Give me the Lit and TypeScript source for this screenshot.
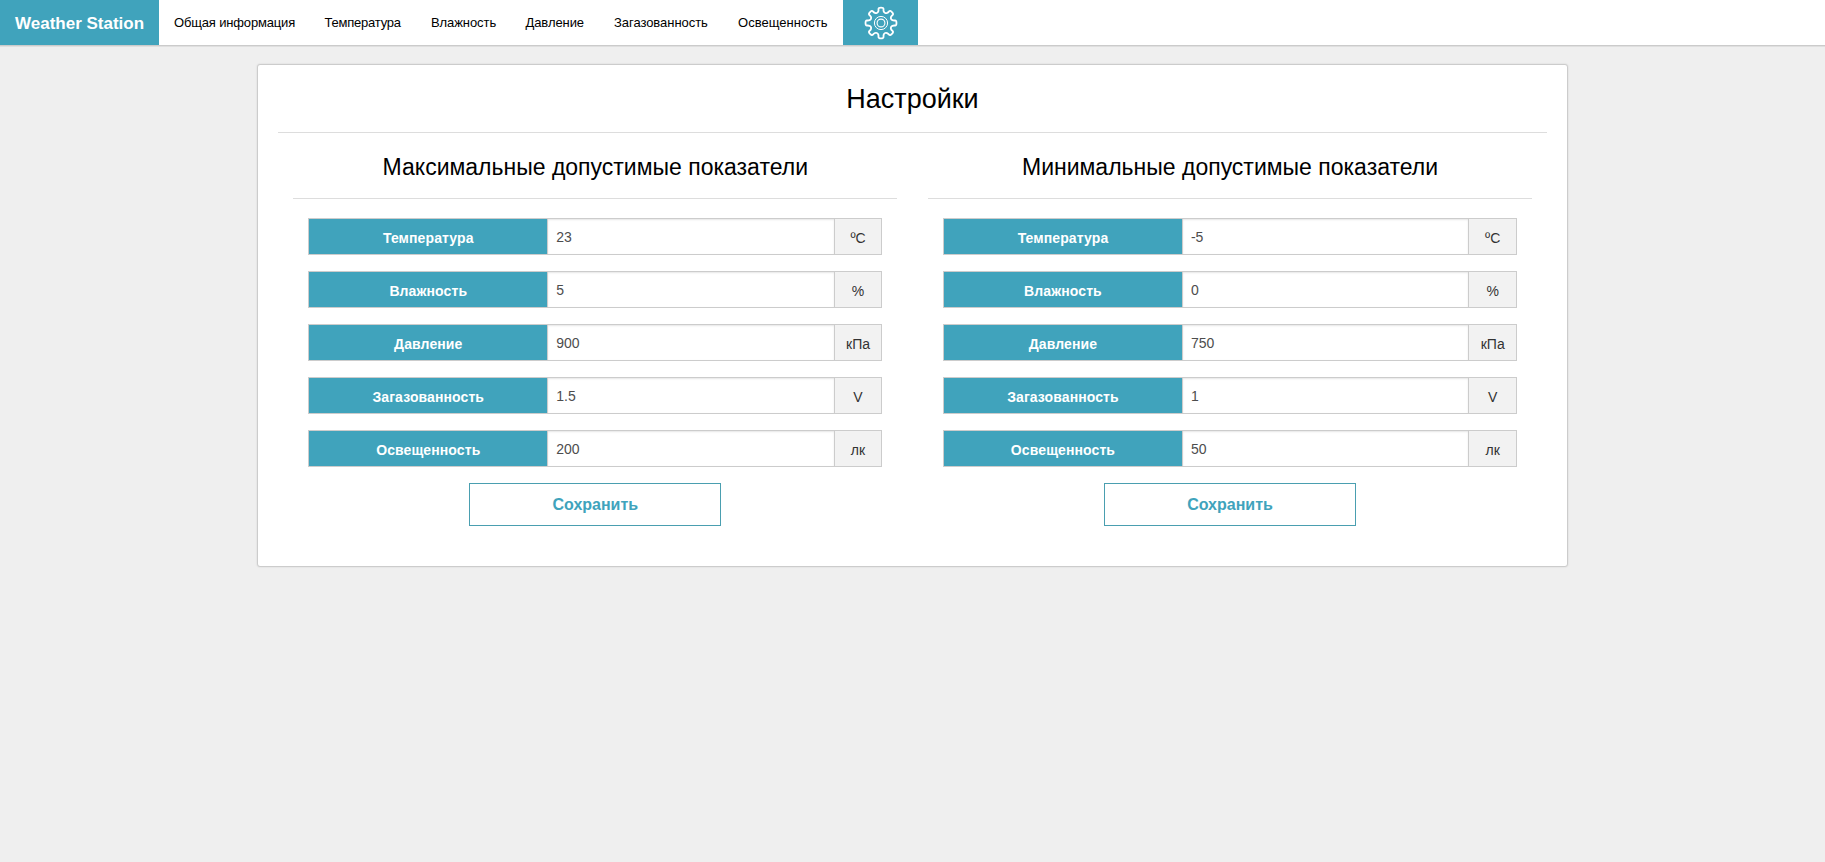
import { LitElement, html, css, svg } from "lit";
import { customElement, property } from "lit/decorators.js";
import { styleMap } from "lit/directives/style-map.js";

interface Reading {
  label: string;
  value: string;
  unit: string;
}

interface NavLink {
  text: string;
  width: number;
  spacing: number;
}

// Outline of an eight-toothed gear with softly rounded teeth, centred on the origin.
const gearOutline = (): string => {
  const teeth = 8;
  const profile: Array<[number, number]> = [
    [-0.3, 10.9],
    [-0.19, 12.6],
    [-0.17, 15.7],
    [0.17, 15.7],
    [0.19, 12.6],
    [0.3, 10.9],
  ];
  const pts: Array<[number, number]> = [];
  for (let i = 0; i < teeth; i++) {
    const base = (i * 2 * Math.PI) / teeth - Math.PI / 2;
    for (const [offset, radius] of profile) {
      pts.push([radius * Math.cos(base + offset), radius * Math.sin(base + offset)]);
    }
  }
  const mid = (a: [number, number], b: [number, number]) =>
    `${((a[0] + b[0]) / 2).toFixed(2)} ${((a[1] + b[1]) / 2).toFixed(2)}`;
  let d = `M${mid(pts[pts.length - 1], pts[0])}`;
  pts.forEach((p, i) => {
    d += `Q${p[0].toFixed(2)} ${p[1].toFixed(2)} ${mid(p, pts[(i + 1) % pts.length])}`;
  });
  return d + "Z";
};

@customElement("nav-bar")
export class NavBar extends LitElement {
  static styles = css`
    :host { display: block; }
    .bar {
      display: flex;
      height: 45px;
      background: #fff;
      box-shadow: 0 1px 0 #cbcbcb, 0 2px 0 #dfdfdf;
      font-size: 13px;
      line-height: 45px;
      color: #000;
      white-space: nowrap;
    }
    .brand {
      box-sizing: border-box;
      width: 159px;
      padding: 1px 15px 0;
      background: #40a3bc;
      color: #fff;
      font-size: 17px;
      line-height: 45px;
      height: 45px;
      font-weight: bold;
    }
    .link { box-sizing: border-box; padding-left: 15px; }
    .gear {
      display: flex;
      align-items: center;
      justify-content: center;
      width: 75px;
      background: #40a3bc;
    }
    .icon { display: block; margin-top: 1px; }
  `;

  private links: NavLink[] = [
    { text: "Общая информация", width: 150.5, spacing: -0.16 },
    { text: "Температура", width: 106.5, spacing: -0.22 },
    { text: "Влажность", width: 94.5, spacing: -0.08 },
    { text: "Давление", width: 88.5, spacing: -0.08 },
    { text: "Загазованность", width: 124, spacing: -0.05 },
    { text: "Освещенность", width: 120, spacing: 0.03 },
  ];

  render() {
    return html`
      <nav class="bar">
        <span class="brand">Weather Station</span>
        ${this.links.map(
          (l) => html`<span class="link" style=${styleMap({ width: `${l.width}px`, letterSpacing: `${l.spacing}px` })}
            >${l.text}</span
          >`
        )}
        <span class="gear">
          <svg class="icon" width="34" height="34" viewBox="-17 -17 34 34" fill="none" stroke="#fff">
            ${svg`<path d=${gearOutline()} stroke-width="1.8" stroke-linejoin="round"></path>`}
            <circle r="6.6" stroke-width="1"></circle>
            <circle r="3.9" stroke-width="1.1"></circle>
          </svg>
        </span>
      </nav>
    `;
  }
}

@customElement("limits-form")
export class LimitsForm extends LitElement {
  @property() heading = "";
  @property({ attribute: false }) readings: Reading[] = [];

  static styles = css`
    :host { display: block; flex: 1 1 0; min-width: 0; padding: 0 15px; }
    .title {
      margin: 0;
      padding: 18px 0 0;
      height: 47px;
      border-bottom: 1px solid #ddd;
      text-align: center;
      font-size: 23px;
      font-weight: normal;
      line-height: 32px;
      color: #000;
    }
    .rows {
      display: flex;
      flex-direction: column;
      gap: 16px;
      padding: 19px 15px 16px;
    }
    .row {
      display: grid;
      grid-template-columns: 4.995fr 6.01fr 0.995fr;
      height: 37px;
      font-size: 14px;
    }
    .cell {
      box-sizing: border-box;
      min-width: 0;
      border: 1px solid #ccc;
      height: 37px;
      line-height: 38px;
      text-align: center;
    }
    .label { border-right: 0; background: #40a3bc; color: #fff; font-weight: bold; letter-spacing: 0.1px; }
    .unit { border-left: 0; background: #f2f2f2; color: #333; }
    .value {
      display: block;
      width: 100%;
      margin: 0;
      padding: 0 8px;
      text-align: left;
      font: inherit;
      color: #4d4d4d;
      background: #fff;
      border-radius: 0;
      box-shadow: inset 0 1px 2px rgba(0, 0, 0, 0.1);
      outline: none;
    }
    .save {
      display: block;
      box-sizing: border-box;
      width: 252px;
      height: 43px;
      margin: 0 auto;
      padding: 0;
      border: 1px solid #4a9fb0;
      background: #fff;
      color: #40a3bc;
      font: bold 16px "Liberation Sans", Arial, sans-serif;
    }
  `;

  render() {
    return html`
      <h2 class="title">${this.heading}</h2>
      <div class="rows">
        ${this.readings.map(
          (r) => html`
            <label class="row">
              <span class="cell label">${r.label}</span>
              <input class="cell value" type="text" .value=${r.value} />
              <span class="cell unit">${r.unit}</span>
            </label>
          `
        )}
      </div>
      <button class="save" type="button">Сохранить</button>
    `;
  }
}

@customElement("app-root")
export class AppRoot extends LitElement {
  static styles = css`
    :host {
      display: block;
      min-height: 100vh;
      background: #efefef;
      font-family: "Liberation Sans", Arial, sans-serif;
    }
    .card {
      box-sizing: border-box;
      width: 1311px;
      height: 503px;
      margin: 19px auto 0;
      padding: 0 20px;
      border: 1px solid #ccc;
      border-radius: 3px;
      background: #fff;
      box-shadow: 0 0 2px rgba(0, 0, 0, 0.12);
    }
    .title {
      margin: 0;
      padding-top: 15px;
      height: 52px;
      border-bottom: 1px solid #ddd;
      text-align: center;
      font-size: 27px;
      font-weight: normal;
      line-height: 38px;
      color: #000;
    }
    .columns { display: flex; gap: 0.7px; padding-left: 0.3px; }
  `;

  private build(values: string[]): Reading[] {
    const labels = ["Температура", "Влажность", "Давление", "Загазованность", "Освещенность"];
    const units = ["ºC", "%", "кПа", "V", "лк"];
    return labels.map((label, i) => ({ label, value: values[i], unit: units[i] }));
  }

  render() {
    return html`
      <nav-bar></nav-bar>
      <main class="card">
        <h1 class="title">Настройки</h1>
        <div class="columns">
          <limits-form
            heading="Максимальные допустимые показатели"
            .readings=${this.build(["23", "5", "900", "1.5", "200"])}
          ></limits-form>
          <limits-form
            heading="Минимальные допустимые показатели"
            .readings=${this.build(["-5", "0", "750", "1", "50"])}
          ></limits-form>
        </div>
      </main>
    `;
  }
}
